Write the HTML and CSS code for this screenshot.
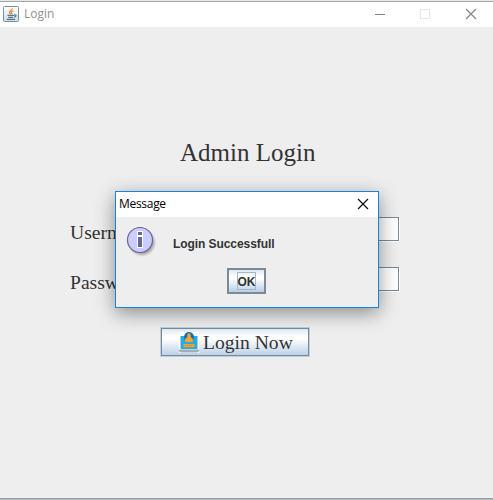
FILE: index.html
```html
<!DOCTYPE html>
<html lang="en">
<head>
<meta charset="utf-8">
<title>Login</title>
<link rel="stylesheet" href="styles.css">
</head>
<body>
<div class="window">
  <header class="titlebar">
    <svg class="java" width="16" height="16" viewBox="0 0 16 16">
      <defs><linearGradient id="tile" x2="0" y2="1"><stop offset="0" stop-color="#fff"/><stop offset="1" stop-color="#cfdbe5"/></linearGradient></defs>
      <rect x=".5" y=".5" width="15" height="15" rx="1" fill="url(#tile)" stroke="#7890a2"/>
      <path d="M9 2.5C9.5 4 5.500 5 6.500 6.500L8 8.200M10.300 4.800C8 5.700 7.800 6.300 9 8" fill="none" stroke="#ed8c36" stroke-width="1.3"/>
      <path d="M4.500 9.300h6.700M5.200 11.300h5M11.200 9c2.600-.8 2.300 1.700 0 2.200M3.800 13.400h8.300" fill="none" stroke="#58778e" stroke-width="1.2"/>
    </svg>
    <span class="caption">Login</span>
    <svg class="controls" width="102" height="12" viewBox="0 0 102 12">
      <path d="M0 6.500h10" stroke="#858585"/>
      <rect x="45.500" y="1.500" width="9" height="9" fill="none" stroke="#e5e5e5"/>
      <path d="M91 1l10 10M101 1L91 11" stroke="#858585" stroke-width="1.2"/>
    </svg>
  </header>
  <main class="content">
    <h1>Admin Login</h1>
    <form class="form">
      <label for="user">Username</label><input id="user" type="text">
      <label for="pass">Password</label><input id="pass" type="password">
    </form>
    <button class="login" type="button">
      <svg width="20" height="21" viewBox="0 0 20 21">
        <path fill="#fff" d="M0 0h20v21H0z"/>
        <path d="M1.500 4h17v13h-17z" fill="#28aae4"/>
        <circle cx="10" cy="5" r="5" fill="#146fb5"/>
        <path d="M6.200 10V6.800L8.300 5.300V3a1.700 1.700 0 0 1 3.400 0v2.300l2.100 1.500V10z" fill="#f7a52c"/>
        <path d="M4.500 12h11v3.200h-11z" fill="#f6a02c"/>
        <path d="M6 13.500h8" stroke="#c9872d" stroke-dasharray="1 1"/>
        <path d="M0 17h20v2l-1.500 1.500h-17L0 19z" fill="#a3acb3"/>
        <path d="M0 17.500h20" stroke="#cbd2d7"/>
      </svg>
      <span>Login Now</span>
    </button>
  </main>
  <section class="dialog" role="dialog">
    <header class="dialog-title">
      <span>Message</span>
      <svg width="12" height="12" viewBox="0 0 12 12"><path d="M1 1l10 10M11 1L1 11" stroke="#111" stroke-width="1.2"/></svg>
    </header>
    <div class="dialog-body">
      <div class="message">
        <svg width="32" height="32" viewBox="0 0 32 32">
          <defs><filter id="soft" x="-30%" y="-30%" width="160%" height="160%"><feGaussianBlur stdDeviation="1.300"/></filter></defs>
          <circle cx="16" cy="15.500" r="12.500" fill="#777" opacity=".6" filter="url(#soft)"/>
          <circle cx="14" cy="13" r="12.500" fill="#ccf" stroke="#669" stroke-width="1.200"/>
          <path d="M11 4h6v17h-6z" fill="#fff"/>
          <path d="M12 5h4v3h-4zM12 10h4v10h-4z" fill="#669"/>
        </svg>
        <span>Login Successfull</span>
      </div>
      <button class="ok" type="button"><span>OK</span></button>
    </div>
  </section>
</div>
</body>
</html>
```
FILE: styles.css
```css
* { box-sizing: border-box; }
body { margin: 0; background: #eee; overflow: hidden; }
.window {
  position: relative;
  width: 493px;
  height: 500px;
  display: flex;
  flex-direction: column;
  border-top: 1px solid #e8e8e8;
  border-bottom: 1px solid #b1b5ba;
  background: #eee;
}
.titlebar {
  height: 26px;
  flex: none;
  display: flex;
  align-items: center;
  padding: 0 16px 2px 3px;
  border-top: 1px solid #a6a6a6;
  background: #fff;
  font: 12px/16px "Open Sans", "Noto Sans", sans-serif;
  color: #929292;
}
.java { flex: none; }
.caption { margin-left: 5px; }
.controls { margin-left: auto; }
.content {
  flex: 1;
  display: flex;
  flex-direction: column;
  color: #333;
  border-bottom: 1px solid #989ea5;
  font-family: "Liberation Serif", serif;
}
h1 {
  margin: 111px 0 0 180px;
  font-size: 25px;
  line-height: 30px;
  font-weight: 400;
}
.form {
  margin: 49px 94px 0 70px;
  display: grid;
  grid-template-columns: 110px 1fr;
  grid-auto-rows: 24px;
  row-gap: 26px;
  font-size: 19.6px;
}
.form label { line-height: 32px; }
.form input {
  width: 100%;
  height: 24px;
  border: 1px solid #7a8a99;
  border-radius: 0;
  background: #fff;
  box-shadow: 1px 1px 0 #fff;
}
.login {
  width: 150px;
  height: 30px;
  margin: 36px 0 0 160px;
  padding: 0 0 0 18px;
  display: flex;
  align-items: center;
  gap: 4px;
  border: 1px solid #b8cfe5;
  border-radius: 0;
  box-shadow: inset 0 0 0 1px #7a8a99;
  background: linear-gradient(#dde8f3 0, #fff 30%, #fff 38%, #b8cfe5 100%);
  color: #333;
  font: 19.6px/24px "Liberation Serif", serif;
}
.login svg { flex: none; }
.login span { padding-top: 2px; }
.dialog {
  position: absolute;
  left: 115px;
  top: 190px;
  width: 264px;
  height: 117px;
  border: 1px solid #1883d7;
  background: #eee;
  box-shadow: 0 5px 18px rgba(0, 0, 0, .42);
  color: #333;
}
.dialog-title {
  height: 25px;
  display: flex;
  align-items: center;
  justify-content: space-between;
  padding: 0 9px 2px 3px;
  background: #fff;
  color: #000;
  font: 12px/16px "Open Sans", "Noto Sans", sans-serif;
}
.dialog-title span { letter-spacing: -.3px; padding-top: 1px; }
.dialog-body { padding: 10px 10px 0; }
.message {
  display: flex;
  align-items: center;
  gap: 15px;
  height: 32px;
  font: bold 12px/16px "Liberation Sans", sans-serif;
}
.message span { padding-top: 1px; letter-spacing: -.07px; }
.ok {
  display: flex;
  align-items: center;
  justify-content: center;
  width: 39px;
  height: 26px;
  margin: 9px 0 0 101px;
  padding: 0;
  border: 2px solid #7a8a99;
  border-radius: 0;
  background: linear-gradient(#dde8f3 0, #fff 30%, #fff 38%, #b8cfe5 100%);
  color: #333;
  font: bold 12px/18px "Liberation Sans", sans-serif;
}
.ok span {
  display: flex;
  justify-content: center;
  width: 19px;
  height: 18px;
  border: 1px solid #a3b8cc;
}
```
